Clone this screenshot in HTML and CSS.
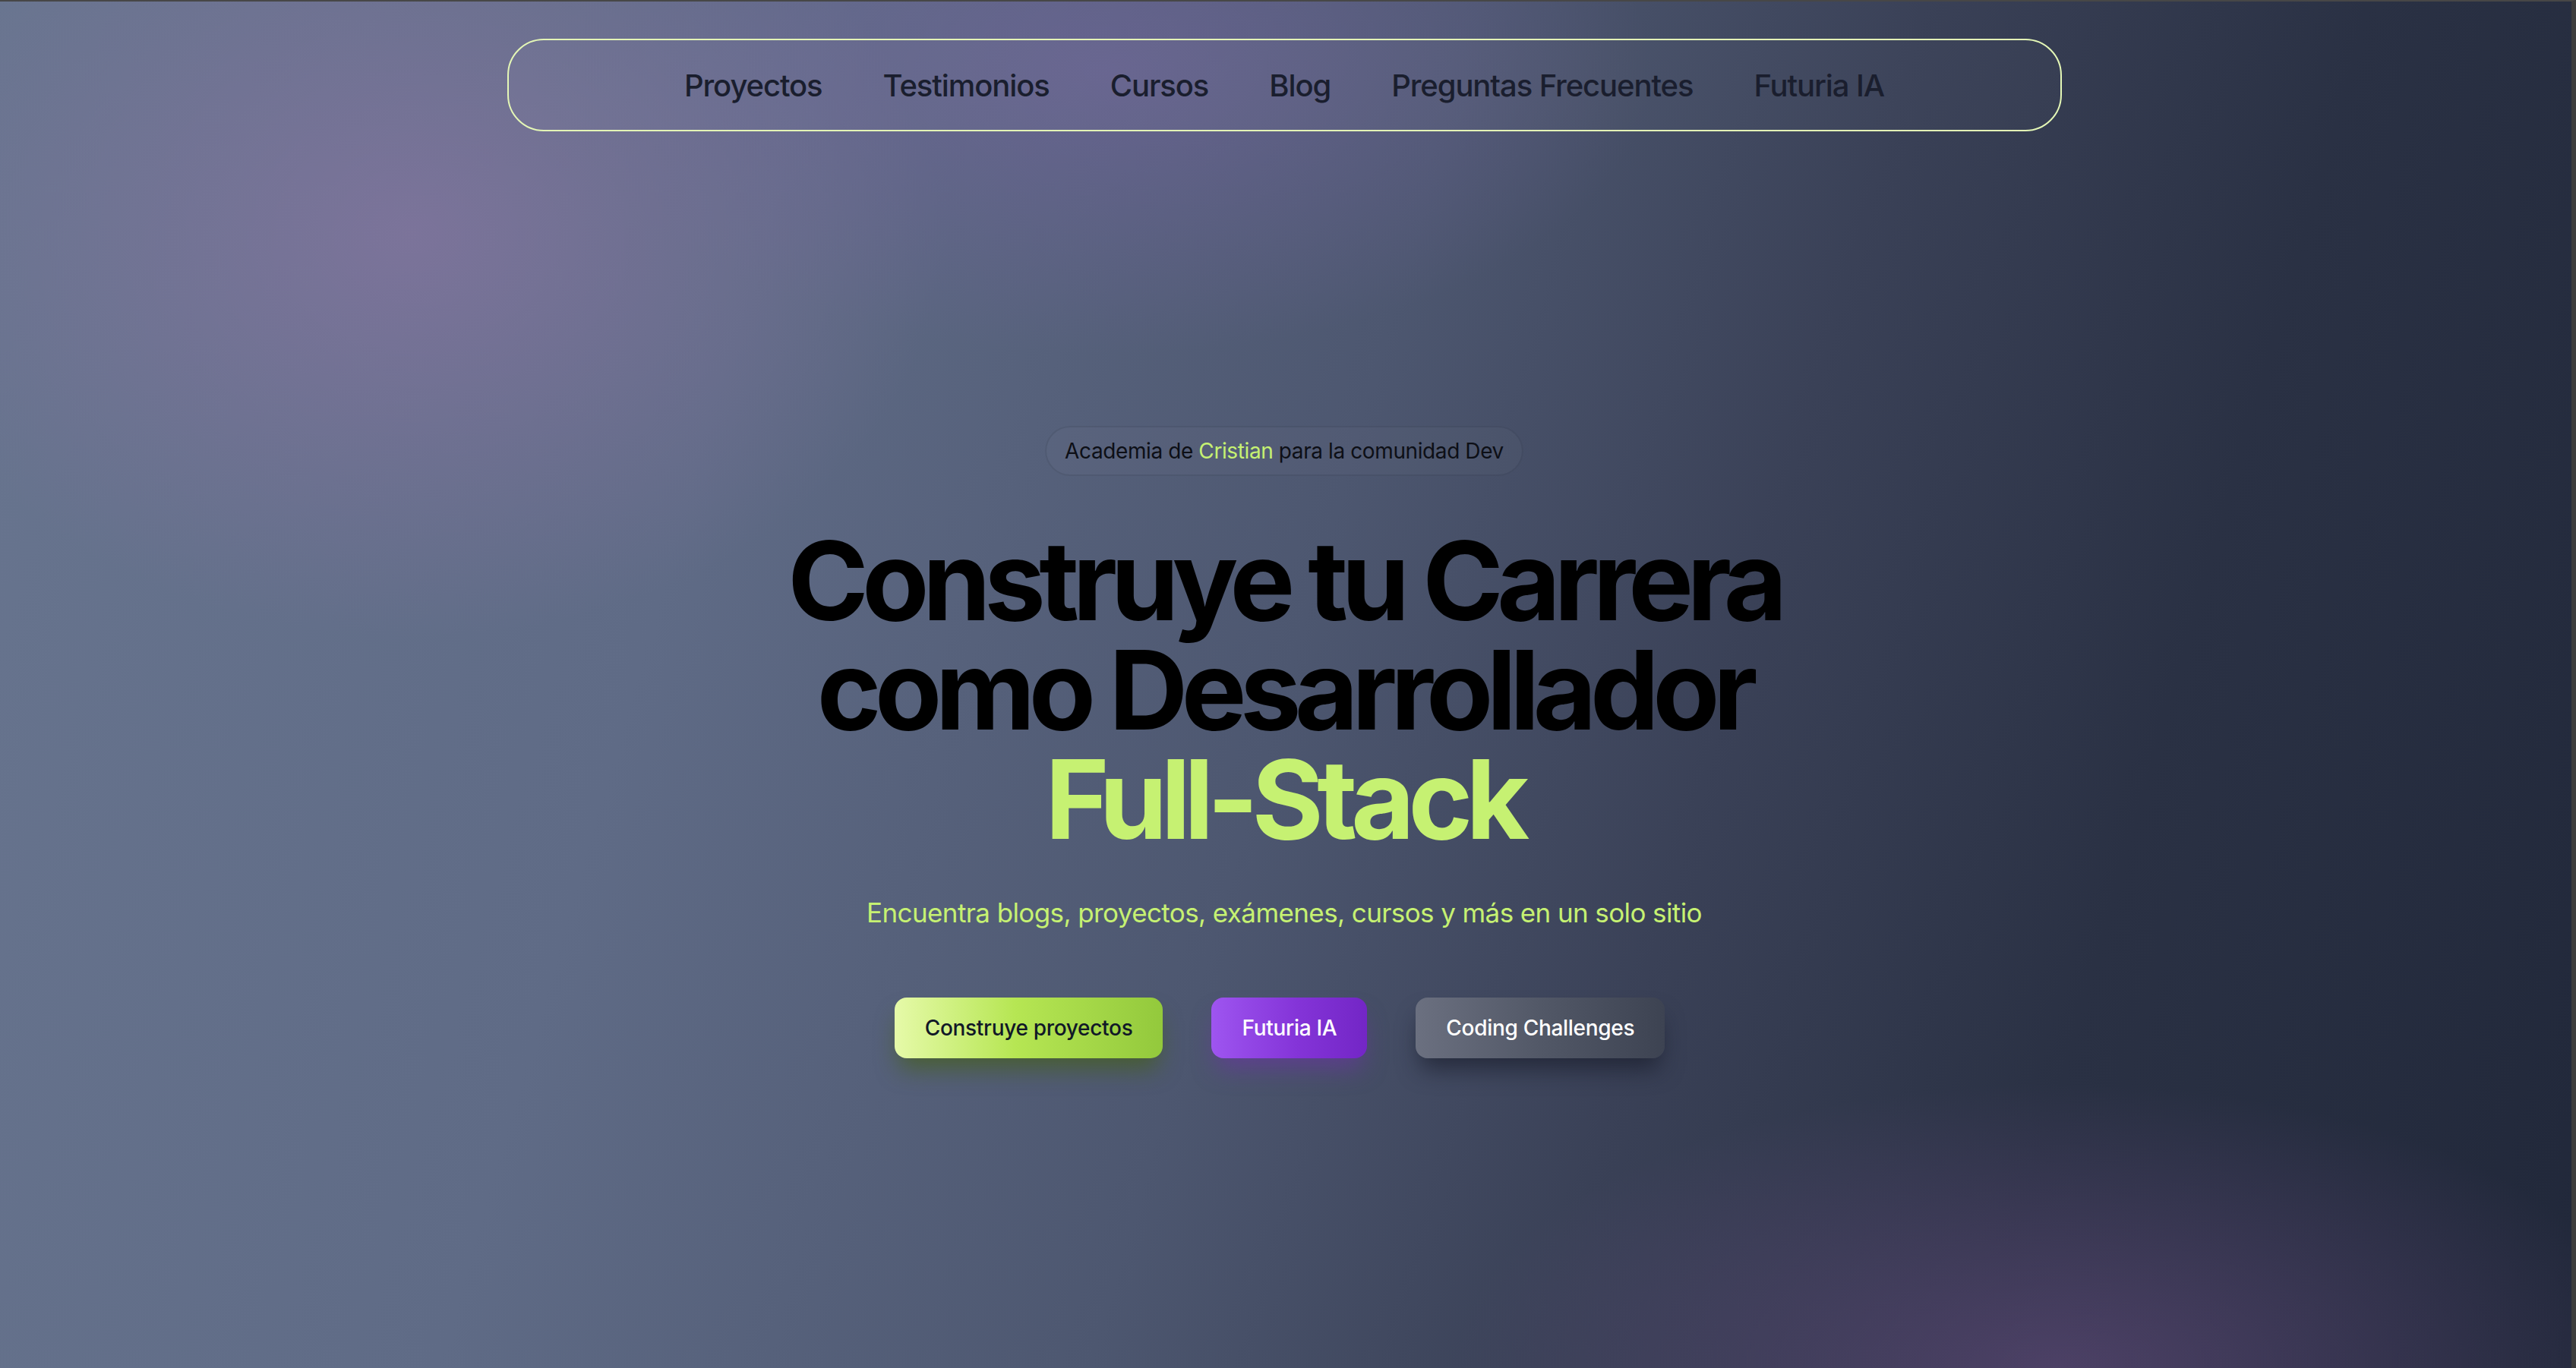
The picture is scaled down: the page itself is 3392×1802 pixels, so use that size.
FILE: index.html
```html
<!DOCTYPE html>
<html lang="es">
<head>
<meta charset="utf-8">
<title>Academia</title>
<link rel="stylesheet" href="styles.css">
</head>
<body>
<div class="frame">
  <div class="page">
    <header class="nav-wrap">
      <nav class="nav">
        <a class="nav-link" href="#">Proyectos</a>
        <a class="nav-link" href="#">Testimonios</a>
        <a class="nav-link" href="#">Cursos</a>
        <a class="nav-link" href="#">Blog</a>
        <a class="nav-link" href="#">Preguntas Frecuentes</a>
        <a class="nav-link" href="#">Futuria IA</a>
      </nav>
    </header>
    <main class="hero">
      <div class="badge">Academia de <span class="accent">Cristian</span> para la comunidad Dev</div>
      <h1 class="title"><span class="title-line">Construye tu Carrera</span><span class="title-line">como Desarrollador</span><span class="title-line accent">Full-Stack</span></h1>
      <p class="subtitle">Encuentra blogs, proyectos, exámenes, cursos y más en un solo sitio</p>
      <div class="actions">
        <a class="btn btn-lime" href="#">Construye proyectos</a>
        <a class="btn btn-purple" href="#">Futuria IA</a>
        <a class="btn btn-gray" href="#">Coding Challenges</a>
      </div>
    </main>
  </div>
</div>
</body>
</html>
```
FILE: styles.css
```css
html, body {
  margin: 0;
  padding: 0;
  background: #3a3a3a;
}
body {
  font-family: Inter, "Noto Sans", "Liberation Sans", sans-serif;
}
.frame {
  box-sizing: border-box;
  height: 1802px;
  border-top: 2px solid #474747;
  border-right: 6px solid #3d3d3d;
  overflow: hidden;
}
.page {
  height: 100%;
  background:
    radial-gradient(ellipse 1000px 760px at 16% 17%, rgba(140, 118, 165, 0.6), rgba(140, 118, 165, 0) 70%),
    radial-gradient(ellipse 1000px 520px at 43% 5%, rgba(112, 100, 155, 0.6), rgba(112, 100, 155, 0) 72%),
    radial-gradient(ellipse 1100px 520px at 80% 100%, rgba(105, 78, 130, 0.55), rgba(105, 78, 130, 0) 72%),
    linear-gradient(106deg, #68758f 0%, #5f6b86 28%, #4d5770 50%, #3a4157 65%, #2a3144 80%, #21283a 100%);
  display: flex;
  flex-direction: column;
  align-items: center;
}
.nav-wrap {
  margin-top: 49px;
  margin-right: 4px;
  width: 2047px;
}
.nav {
  box-sizing: border-box;
  height: 122px;
  border: 2px solid #e4f7b6;
  border-radius: 48px;
  background: rgba(255, 255, 255, 0.02);
  display: flex;
  justify-content: center;
  align-items: center;
  gap: 80px;
}
.nav-link {
  font-size: 40px;
  font-weight: 500;
  color: #1a1e2e;
  text-decoration: none;
  letter-spacing: -1.1px;
}
.hero {
  display: flex;
  flex-direction: column;
  align-items: center;
  margin-right: 4px;
}
.badge {
  margin-top: 388px;
  box-sizing: border-box;
  height: 66px;
  padding: 0 24px;
  border: 2px solid rgba(20, 24, 40, 0.12);
  border-radius: 40px;
  background: rgba(255, 255, 255, 0.025);
  font-size: 28px;
  line-height: 62px;
  letter-spacing: -0.4px;
  color: #0d0f16;
}
.accent {
  color: #c6f172;
}
.title {
  margin: 66px 0 0;
  display: flex;
  flex-direction: column;
  align-items: center;
  font-size: 144px;
  line-height: 144px;
  font-weight: 700;
  letter-spacing: -8.5px;
  text-align: center;
  color: #000;
}
.title-line {
  display: block;
  height: 144px;
}
.subtitle {
  margin: 53px 0 0;
  font-size: 35px;
  line-height: 48px;
  letter-spacing: -0.6px;
  color: #c6f172;
}
.actions {
  margin-top: 88px;
  margin-right: 12px;
  display: flex;
  gap: 64px;
}
.btn {
  box-sizing: border-box;
  height: 80px;
  padding: 0 40px;
  border-radius: 16px;
  display: flex;
  align-items: center;
  font-size: 28px;
  font-weight: 500;
  letter-spacing: -0.3px;
  text-decoration: none;
}
.btn-lime {
  background: linear-gradient(90deg, #e6faa9 0%, #b6e653 45%, #93c93c 100%);
  color: #111827;
  box-shadow: 0 20px 30px -6px rgba(70, 95, 30, 0.75);
}
.btn-purple {
  background: linear-gradient(90deg, #9e55f0 0%, #8434d8 55%, #7326c6 100%);
  color: #fff;
  box-shadow: 0 20px 30px -6px rgba(110, 50, 170, 0.55);
}
.btn-gray {
  background: linear-gradient(90deg, #6b7080 0%, #525867 50%, #3d4352 100%);
  color: #fff;
  box-shadow: 0 20px 30px -6px rgba(20, 24, 36, 0.6);
}
```
